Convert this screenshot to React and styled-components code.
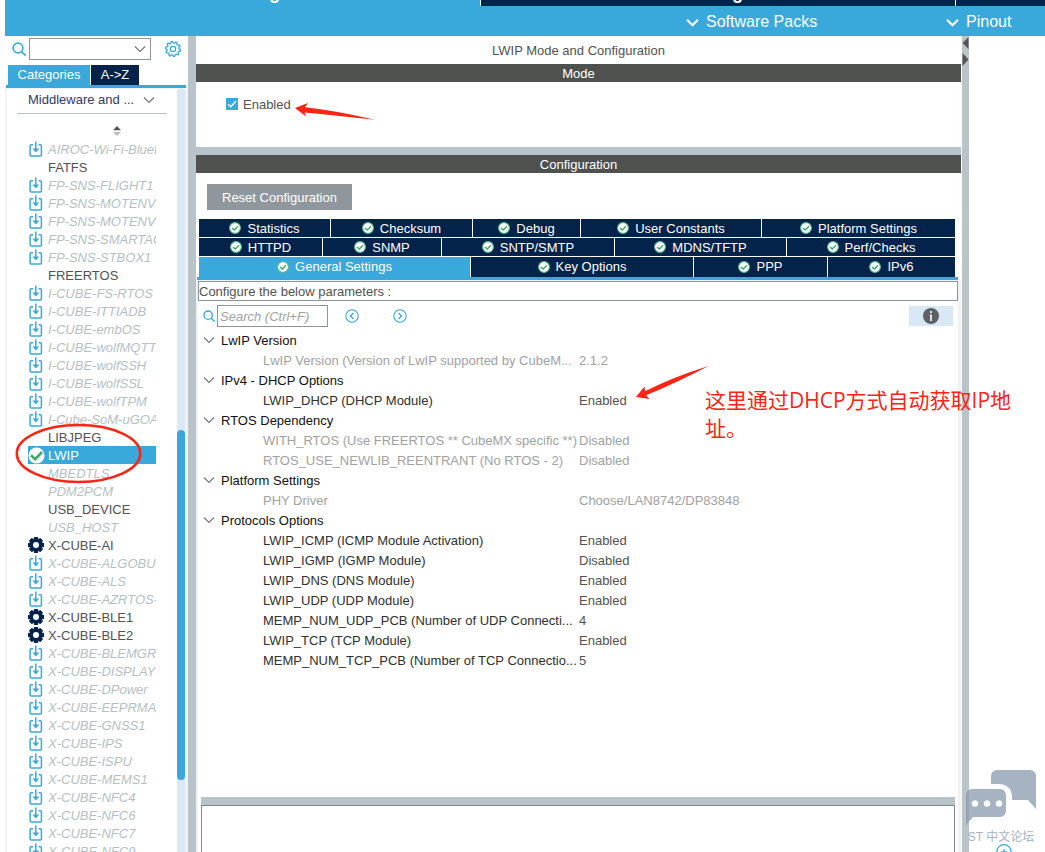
import React from "react";
import styled, { createGlobalStyle, css } from "styled-components";

const c = {
  blue: "#39a9dc",
  navy: "#03234b",
  dark: "#4f514f",
  split: "#b8c4ca",
  pale: "#d9e8f6",
  edge: "#f0f2f3",
  line: "#8c959c",
  red: "#ff2414",
  text: "#525252",
  off: "#a2a2a2",
};

const GlobalStyle = createGlobalStyle`
  *, *::before, *::after { box-sizing: border-box; }
  body {
    margin: 0;
    background: #fff;
    color: ${c.text};
    font: 13px/18px "Liberation Sans", Arial, sans-serif;
  }
  button, input, select {
    margin: 0;
    padding: 0;
    border: 0;
    border-radius: 0;
    background: none;
    color: inherit;
    font: inherit;
  }
  svg { display: block; flex: none; }
`;

const Shell = styled.div`
  position: relative;
  display: flex;
  flex-direction: column;
  height: 100vh;
  padding-left: 5px;
  overflow: hidden;
`;

const MainTabs = styled.nav`
  display: grid;
  grid-template-columns: 475fr 474fr 474px;
  gap: 1px;
  flex: none;
  height: 6px;
  margin-right: -385px;
  overflow: hidden;
`;

const MainTab = styled.button`
  display: flex;
  align-items: flex-end;
  justify-content: center;
  height: 6px;
  padding-bottom: 3px;
  background: ${(p) => (p.$active ? c.blue : c.navy)};
  color: #fff;
  font-size: 18px;
  font-weight: bold;
  line-height: 20px;
  white-space: nowrap;
`;

const MenuBar = styled.nav`
  display: flex;
  justify-content: flex-end;
  flex: none;
  height: 30px;
  background: ${c.blue};
`;

const MenuButton = styled.button`
  display: flex;
  align-items: center;
  gap: 7px;
  width: ${(p) => p.$width};
  padding-top: 2px;
  color: #fff;
  font-size: 16px;
  line-height: 20px;
`;

const Body = styled.div`
  display: flex;
  flex: 1;
  min-height: 0;
`;

const Sidebar = styled.aside`
  display: flex;
  flex-direction: column;
  flex: none;
  width: 183px;
`;

const SearchRow = styled.div`
  display: flex;
  align-items: center;
  flex: none;
  height: 26px;
  margin-bottom: 1px;
  padding: 0 6px 0 7px;
`;

const SelectBox = styled.div`
  display: grid;
  align-items: center;
  width: ${(p) => p.$width};
  height: ${(p) => p.$height};
  margin: ${(p) => p.$margin};
  border: solid ${c.line};
  border-width: ${(p) => (p.$underline ? "0" : "1px")};
  > * { grid-area: 1 / 1; }
  > svg { justify-self: end; margin-right: ${(p) => (p.$underline ? "12px" : "4px")}; pointer-events: none; }
`;

const UnderLine = styled.div`
  width: 150px;
  margin: 0 0 0 10px;
  padding-bottom: 3px;
  border-bottom: 1px solid ${c.split};
`;

const Select = styled.select`
  width: 100%;
  height: 100%;
  padding-left: ${(p) => p.$pad};
  appearance: none;
  outline: none;
  color: #33386b;
`;

const IconButton = styled.button`
  display: flex;
  align-items: center;
  justify-content: center;
  width: ${(p) => p.$width || "16px"};
  height: 20px;
  background: ${(p) => p.$bg || "none"};
`;

const SideTabs = styled.div`
  display: flex;
  gap: 1px;
  flex: none;
  height: 25px;
  margin: 0 2px 0 1px;
  padding: 2px 2px 0;
  border-bottom: 3px solid ${c.blue};
`;

const SideTab = styled.button`
  width: ${(p) => p.$width};
  padding-bottom: 1px;
  background: ${(p) => (p.$active ? c.blue : c.navy)};
  color: #fff;
`;

const SidePanel = styled.div`
  display: flex;
  flex: 1;
  min-height: 0;
  border: solid ${c.edge};
  border-width: 1px 3px 0 2px;
`;

const SideContent = styled.div`
  display: flex;
  flex-direction: column;
  align-items: flex-start;
  flex: 1;
  min-width: 0;
`;

const SortMark = styled.div`
  margin: 12px 0 4px 105px;
`;

const List = styled.ul`
  flex: 1;
  min-height: 0;
  width: 128px;
  margin: 0 0 0 21px;
  padding: 0;
  overflow: hidden;
  list-style: none;
`;

const ListItem = styled.button`
  display: grid;
  grid-template-columns: 20px 1fr;
  align-items: center;
  width: 100%;
  height: 18px;
  overflow: hidden;
  white-space: nowrap;
  text-align: left;
  line-height: 16px;
  ${(p) => p.$off && css`color: #b6bfc4; font-style: italic;`}
  ${(p) => p.$selected && css`background: ${c.blue}; color: #fff;`}
`;

const ItemName = styled.span`
  padding-top: 2px;
`;

const Track = styled.div`
  display: grid;
  grid-template-rows: 341fr 350fr 72fr;
  width: 8px;
  background: ${c.pale};
`;

const Thumb = styled.div`
  grid-row: 2;
  border-radius: 4px;
  background: ${c.blue};
`;

const Splitter = styled.div`
  flex: none;
  width: ${(p) => p.$width || "auto"};
  height: ${(p) => p.$height || "auto"};
  background: ${c.split};
`;

const Center = styled.main`
  display: flex;
  flex-direction: column;
  flex: 1;
  min-width: 0;
  padding-right: 1px;
`;

const Title = styled.h1`
  margin: 0;
  padding-top: 2px;
  font-size: 13px;
  font-weight: normal;
  line-height: 26px;
  text-align: center;
`;

const Bar = styled.h2`
  flex: none;
  margin: 0;
  padding-top: 2px;
  background: ${c.dark};
  color: #fff;
  font-size: 13px;
  font-weight: normal;
  line-height: 16px;
  text-align: center;
`;

const ModeArea = styled.section`
  flex: none;
  height: 65px;
  padding: 12px 30px;
`;

const CheckLabel = styled.label`
  display: flex;
  align-items: center;
  gap: 5px;
`;

const CheckText = styled.span`
  padding-top: 2px;
  line-height: 18px;
`;

const CheckWrap = styled.span`
  display: grid;
  place-items: center;
  > * { grid-area: 1 / 1; }
  > svg { pointer-events: none; }
`;

const CheckInput = styled.input`
  appearance: none;
  width: 12px;
  height: 12px;
  background: ${c.blue};
`;

const Config = styled.section`
  display: flex;
  flex-direction: column;
  flex: 1;
  min-height: 0;
  padding-top: 11px;
`;

const ResetButton = styled.button`
  flex: none;
  align-self: flex-start;
  margin: 0 0 9px 11px;
  padding: 5px 15px 3px;
  background: #90979c;
  color: #fff;
`;

const TabRows = styled.div`
  display: grid;
  gap: 1px;
  flex: none;
  margin: 0 3px 0 1px;
  padding: 0 3px 0 2px;
  border-bottom: 3px solid ${c.blue};
`;

const TabRow = styled.div`
  display: grid;
  grid-template-columns: ${(p) => p.$cols};
  gap: 1px;
  height: ${(p) => p.$height};
`;

const ConfigTab = styled.button`
  display: flex;
  align-items: center;
  justify-content: center;
  gap: 6px;
  min-width: 0;
  background: ${(p) => (p.$active ? c.blue : c.navy)};
  color: #fff;
  line-height: 16px;
  white-space: nowrap;
  > span { padding-top: ${(p) => (p.$tall ? "0" : "2px")}; }
`;

const TabPanel = styled.div`
  display: flex;
  flex-direction: column;
  flex: 1;
  min-height: 0;
  border: solid ${c.edge};
  border-width: 1px 3px 0 2px;
`;

const Hint = styled.p`
  flex: none;
  margin: 0;
  padding-top: 2px;
  border: 1px solid ${c.line};
  line-height: 16px;
`;

const ToolRow = styled.div`
  display: flex;
  align-items: center;
  flex: none;
  height: 29px;
  padding: 0 5px 0 5px;
`;

const Search = styled.input`
  width: 111px;
  height: 22px;
  margin: 0 16px 0 2px;
  padding: 1px 2px 0;
  border: 1px solid ${c.line};
  font-style: italic;
  outline: none;
  &::placeholder { color: ${c.off}; opacity: 1; }
`;

const Arrows = styled.div`
  display: flex;
  gap: 32px;
  flex: 1;
`;

const TreeArea = styled.div`
  flex: 1;
  min-height: 0;
  overflow: hidden;
`;

const Tree = styled.table`
  width: 100%;
  border-collapse: collapse;
  table-layout: fixed;
  line-height: 18px;
  white-space: nowrap;
`;

const Cell = styled.td`
  height: 20px;
  padding: 2px 0 0 ${(p) => (p.$name ? "65px" : "0")};
  color: ${(p) => (p.$off ? c.off : p.$name ? "#303030" : c.text)};
`;

const GroupCell = styled.th`
  height: 20px;
  padding: 0 0 0 5px;
  color: #111;
  font-weight: normal;
  text-align: left;
`;

const GroupButton = styled.button`
  display: flex;
  align-items: center;
  gap: 6px;
  height: 20px;
  > span { padding-top: 2px; }
`;

const BottomPane = styled.div`
  flex: none;
  margin: 0 3px 0 3px;
  border-top: 8px solid ${c.split};
`;

const Description = styled.div`
  height: 47px;
  border: solid #7c8790;
  border-width: 1px 1px 0;
`;

const RightPane = styled.aside`
  flex: none;
  width: 76px;
`;

const Overlay = styled.svg`
  position: absolute;
  left: ${(p) => p.$left};
  top: ${(p) => p.$top};
  pointer-events: none;
`;

const Note = styled.p`
  position: absolute;
  left: 705px;
  top: 386px;
  width: 316px;
  margin: 0;
  color: ${c.red};
  font: 21px/28px "Open Sans", "Noto Sans CJK SC", sans-serif;
`;

const Watermark = styled.div`
  position: absolute;
  right: 8px;
  bottom: 5px;
  display: flex;
  flex-direction: column;
  align-items: center;
  color: #a9b4c4;
  font: 12px/20px "Liberation Sans", "Noto Sans CJK SC", sans-serif;
  white-space: nowrap;
`;

const ZoomIn = styled.button`
  position: absolute;
  right: 33px;
  bottom: -8px;
`;

const Chevron = ({ size = 12, color = "#777", weight = 1.2 }) => (
  <svg width={size} height={size} viewBox="0 0 12 12" fill="none" stroke={color} strokeWidth={weight}>
    <path d="M1 3.5 6 8.5 11 3.5" />
  </svg>
);

const Lens = ({ size }) => (
  <svg width={size} height={size} viewBox="0 0 14 14" fill="none" stroke={c.blue} strokeWidth="1.6">
    <circle cx="6" cy="6" r="4.9" />
    <path d="m9.6 9.6 4 4" />
  </svg>
);

const Download = () => (
  <svg width="16" height="18" viewBox="0 0 16 18" fill="none" stroke={c.blue} strokeWidth="1.5">
    <path d="M5 4.8H3.1Q2.1 4.8 2.1 5.8V15Q2.1 16 3.1 16H12.4Q13.4 16 13.4 15V5.8Q13.4 4.8 12.4 4.8H10.6" />
    <path d="M7.8 1.6V10" />
    <path d="M4.4 8.6H11.2L7.8 12.6Z" fill={c.blue} stroke="none" />
  </svg>
);

const angles = [0, 45, 90, 135, 180, 225, 270, 315];
const SolidGear = () => (
  <svg width="16" height="16" viewBox="0 0 16 16">
    <circle cx="8" cy="8" r="4.7" fill="none" stroke={c.navy} strokeWidth="3.4" />
    {angles.map((a) => (
      <rect key={a} x="5.8" y="0" width="4.4" height="3" rx="0.8" fill={c.navy} transform={`rotate(${a} 8 8)`} />
    ))}
  </svg>
);

const gearPath = Array.from({ length: 40 }, (_, i) => {
  const a = ((i + 0.5) * Math.PI) / 20;
  const r = i % 4 < 2 ? 7.6 : 6;
  return `${i ? "L" : "M"}${(8 + r * Math.cos(a)).toFixed(2)} ${(8 + r * Math.sin(a)).toFixed(2)}`;
}).join("") + "Z";

const OutlineGear = () => (
  <svg width="16" height="16" viewBox="0 0 16 16" fill="none" stroke={c.blue} strokeWidth="1.3">
    <path d={gearPath} strokeLinejoin="round" />
    <circle cx="8" cy="8" r="2.6" />
  </svg>
);

const Tick = () => (
  <svg width="12" height="12" viewBox="0 0 12 12">
    <circle cx="6" cy="6" r="5.4" fill="#fff" stroke="#58b98a" strokeWidth="1.1" />
    <path d="M3 6 5.2 8.1 9 4.3" fill="none" stroke="#3cab68" strokeWidth="1.4" />
  </svg>
);

const BigTick = () => (
  <svg width="17" height="17" viewBox="0 0 17 17">
    <circle cx="8.5" cy="8.5" r="8" fill="#fff" />
    <path d="M3 8.2 7.2 12.2 14 5" fill="none" stroke="#3cab68" strokeWidth="2.6" />
  </svg>
);

const CircleArrow = ({ right }) => (
  <svg width="14" height="14" viewBox="0 0 14 14" fill="none" stroke={c.blue} strokeWidth="1.1">
    <circle cx="7" cy="7" r="6.2" />
    <path d={right ? "M5.6 4 8.6 7 5.6 10" : "M8.4 4 5.4 7 8.4 10"} strokeWidth="1.4" />
  </svg>
);

const items = [
  ["AIROC-Wi-Fi-Bluetooth", "pack"],
  ["FATFS"],
  ["FP-SNS-FLIGHT1", "pack"],
  ["FP-SNS-MOTENV", "pack"],
  ["FP-SNS-MOTENV", "pack"],
  ["FP-SNS-SMARTAG", "pack"],
  ["FP-SNS-STBOX1", "pack"],
  ["FREERTOS"],
  ["I-CUBE-FS-RTOS", "pack"],
  ["I-CUBE-ITTIADB", "pack"],
  ["I-CUBE-embOS", "pack"],
  ["I-CUBE-wolfMQTT", "pack"],
  ["I-CUBE-wolfSSH", "pack"],
  ["I-CUBE-wolfSSL", "pack"],
  ["I-CUBE-wolfTPM", "pack"],
  ["I-Cube-SoM-uGOAL", "pack"],
  ["LIBJPEG"],
  ["LWIP", "on"],
  ["MBEDTLS", "off"],
  ["PDM2PCM", "off"],
  ["USB_DEVICE"],
  ["USB_HOST", "off"],
  ["X-CUBE-AI", "gear"],
  ["X-CUBE-ALGOBUILD", "pack"],
  ["X-CUBE-ALS", "pack"],
  ["X-CUBE-AZRTOS-", "pack"],
  ["X-CUBE-BLE1", "gear"],
  ["X-CUBE-BLE2", "gear"],
  ["X-CUBE-BLEMGR", "pack"],
  ["X-CUBE-DISPLAY", "pack"],
  ["X-CUBE-DPower", "pack"],
  ["X-CUBE-EEPRMA", "pack"],
  ["X-CUBE-GNSS1", "pack"],
  ["X-CUBE-IPS", "pack"],
  ["X-CUBE-ISPU", "pack"],
  ["X-CUBE-MEMS1", "pack"],
  ["X-CUBE-NFC4", "pack"],
  ["X-CUBE-NFC6", "pack"],
  ["X-CUBE-NFC7", "pack"],
  ["X-CUBE-NFC9", "pack"],
];

const icons = { pack: <Download />, gear: <SolidGear />, on: <BigTick /> };

const tabRows = [
  { cols: "131fr 141fr 107fr 180fr 193fr", height: "18px", tabs: ["Statistics", "Checksum", "Debug", "User Constants", "Platform Settings"] },
  { cols: "123fr 118fr 172fr 171fr 168fr", height: "18px", tabs: ["HTTPD", "SNMP", "SNTP/SMTP", "MDNS/TFTP", "Perf/Checks"] },
  { cols: "271fr 222fr 133fr 127fr", height: "20px", tall: true, tabs: ["General Settings", "Key Options", "PPP", "IPv6"] },
];

const groups = [
  ["LwIP Version", [["LwIP Version (Version of LwIP supported by CubeM...", "2.1.2", true]]],
  ["IPv4 - DHCP Options", [["LWIP_DHCP (DHCP Module)", "Enabled"]]],
  ["RTOS Dependency", [
    ["WITH_RTOS (Use FREERTOS ** CubeMX specific **)", "Disabled", true],
    ["RTOS_USE_NEWLIB_REENTRANT (No RTOS - 2)", "Disabled", true],
  ]],
  ["Platform Settings", [["PHY Driver", "Choose/LAN8742/DP83848", true]]],
  ["Protocols Options", [
    ["LWIP_ICMP (ICMP Module Activation)", "Enabled"],
    ["LWIP_IGMP (IGMP Module)", "Disabled"],
    ["LWIP_DNS (DNS Module)", "Enabled"],
    ["LWIP_UDP (UDP Module)", "Enabled"],
    ["MEMP_NUM_UDP_PCB (Number of UDP Connecti...", "4"],
    ["LWIP_TCP (TCP Module)", "Enabled"],
    ["MEMP_NUM_TCP_PCB (Number of TCP Connectio...", "5"],
  ]],
];

function CategoryPanel() {
  return (
    <Sidebar>
      <SearchRow>
        <Lens size={14} />
        <SelectBox $width="122px" $height="22px" $margin="0 14px 0 3px">
          <Select $pad="4px" aria-label="Search component" defaultValue="">
            <option value=""></option>
          </Select>
          <Chevron />
        </SelectBox>
        <IconButton aria-label="Settings"><OutlineGear /></IconButton>
      </SearchRow>
      <SideTabs>
        <SideTab $active $width="82px">Categories</SideTab>
        <SideTab $width="48px">A-&gt;Z</SideTab>
      </SideTabs>
      <SidePanel>
        <SideContent>
          <UnderLine>
            <SelectBox $underline $width="150px" $height="21px" $margin="0">
              <Select $pad="11px" aria-label="Category">
                <option>Middleware and ...</option>
              </Select>
              <Chevron />
            </SelectBox>
          </UnderLine>
          <SortMark>
            <svg width="10" height="10" viewBox="0 0 10 10">
              <path d="M1 4.2H9L5 0Z" fill="#555" />
              <path d="M1 6H9L5 10Z" fill="#bbb" />
            </svg>
          </SortMark>
          <List>
            {items.map(([name, kind], i) => (
              <li key={i}>
                <ListItem $off={kind === "pack" || kind === "off"} $selected={kind === "on"}>
                  <span>{icons[kind]}</span>
                  <ItemName>{name}</ItemName>
                </ListItem>
              </li>
            ))}
          </List>
        </SideContent>
        <Track><Thumb /></Track>
      </SidePanel>
    </Sidebar>
  );
}

function ParameterTree() {
  return (
    <Tree>
      <colgroup>
        <col width="381" />
        <col />
      </colgroup>
      {groups.map(([title, rows]) => (
        <tbody key={title}>
          <tr>
            <GroupCell colSpan={2}>
              <GroupButton><Chevron /><span>{title}</span></GroupButton>
            </GroupCell>
          </tr>
          {rows.map(([name, value, off]) => (
            <tr key={name}>
              <Cell $name $off={off}>{name}</Cell>
              <Cell $off={off}>{value}</Cell>
            </tr>
          ))}
        </tbody>
      ))}
    </Tree>
  );
}

export default function App() {
  return (
    <Shell>
      <GlobalStyle />
      <MainTabs>
        <MainTab $active>Pinout &amp; Configuration</MainTab>
        <MainTab>Clock Configuration</MainTab>
        <MainTab aria-label="Project" />
      </MainTabs>
      <MenuBar>
        <MenuButton $width="260px"><Chevron size={13} color="#fff" weight={2} />Software Packs</MenuButton>
        <MenuButton $width="99px"><Chevron size={13} color="#fff" weight={2} />Pinout</MenuButton>
      </MenuBar>
      <Body>
        <CategoryPanel />
        <Splitter $width="8px" />
        <Center>
          <Title>LWIP Mode and Configuration</Title>
          <Bar>Mode</Bar>
          <ModeArea>
            <CheckLabel>
              <CheckWrap>
                <CheckInput type="checkbox" defaultChecked />
                <svg width="12" height="12" viewBox="0 0 12 12" fill="none" stroke="#fff" strokeWidth="1.4">
                  <path d="M2.2 6.2 4.8 8.8 9.8 3.2" />
                </svg>
              </CheckWrap>
              <CheckText>Enabled</CheckText>
            </CheckLabel>
          </ModeArea>
          <Splitter $height="8px" />
          <Bar>Configuration</Bar>
          <Config>
            <ResetButton>Reset Configuration</ResetButton>
            <TabRows>
              {tabRows.map((row) => (
                <TabRow key={row.cols} $cols={row.cols} $height={row.height}>
                  {row.tabs.map((tab) => (
                    <ConfigTab key={tab} $active={tab === "General Settings"} $tall={row.tall}>
                      <Tick /><span>{tab}</span>
                    </ConfigTab>
                  ))}
                </TabRow>
              ))}
            </TabRows>
            <TabPanel>
              <Hint>Configure the below parameters :</Hint>
              <ToolRow>
                <Lens size={12} />
                <Search aria-label="Search parameters" placeholder="Search (Ctrl+F)" />
                <Arrows>
                  <IconButton aria-label="Previous"><CircleArrow /></IconButton>
                  <IconButton aria-label="Next"><CircleArrow right /></IconButton>
                </Arrows>
                <IconButton $width="44px" $bg={c.pale} aria-label="Information">
                  <svg width="16" height="16" viewBox="0 0 16 16">
                    <circle cx="8" cy="8" r="8" fill="#5f6163" />
                    <path d="M7 3h2v2H7zM6.6 6.4H9V13H7V7.6h-.4z" fill={c.pale} />
                  </svg>
                </IconButton>
              </ToolRow>
              <TreeArea><ParameterTree /></TreeArea>
              <BottomPane><Description /></BottomPane>
            </TabPanel>
          </Config>
        </Center>
        <Splitter $width="7px">
          <svg width="7" height="30" viewBox="0 0 7 30" fill="#555">
            <path d="M6.5 1V13L0.5 7ZM0.5 17V30L6.5 23.5Z" />
          </svg>
        </Splitter>
        <RightPane />
      </Body>

      <Overlay $left="295px" $top="100px" width="80" height="22" viewBox="295 100 80 22">
        <path d="M295 108 308 103 305 107.3 Q335 110.5 375 119.8 Q335 115.5 304.5 112.5L306 116.5Z" fill={c.red} />
      </Overlay>
      <Overlay $left="635px" $top="364px" width="76" height="38" viewBox="635 364 76 38">
        <path d="M636 397 644.5 386.5 645 391.3 Q673 377 708.5 366 Q676 383 646 395.3L649.5 399Z" fill={c.red} />
      </Overlay>
      <Overlay $left="14px" $top="422px" width="130" height="64" viewBox="14 422 130 64">
        <ellipse cx="78.5" cy="453.5" rx="61.7" ry="28.5" fill="none" stroke={c.red} strokeWidth="2.6" />
      </Overlay>
      <Note>这里通过DHCP方式自动获取IP地址。</Note>
      <Watermark>
        <svg width="72" height="58" viewBox="0 0 72 58" fill="#8a9bb0" fillOpacity="0.76">
          <path d="M26 15V7a6 6 0 0 1 6-6H65a6 6 0 0 1 6 6V40L63 31H47V28C47 20 42 15 34 15Z" />
          <path fillRule="evenodd" d="M7 20H35a6 6 0 0 1 6 6V42a6 6 0 0 1-6 6H8L1 56V26a6 6 0 0 1 6-6ZM10 31.2a3.3 3.3 0 1 0 .01 0ZM22 31.2a3.3 3.3 0 1 0 .01 0ZM34 31.2a3.3 3.3 0 1 0 .01 0Z" />
        </svg>
        <span>ST 中文论坛</span>
      </Watermark>
      <ZoomIn aria-label="Zoom in">
        <svg width="16" height="16" viewBox="0 0 16 16" fill="none" stroke={c.blue} strokeWidth="1.3">
          <circle cx="8" cy="8" r="7.3" />
          <path d="M5 8H11M8 5V11" />
        </svg>
      </ZoomIn>
    </Shell>
  );
}
